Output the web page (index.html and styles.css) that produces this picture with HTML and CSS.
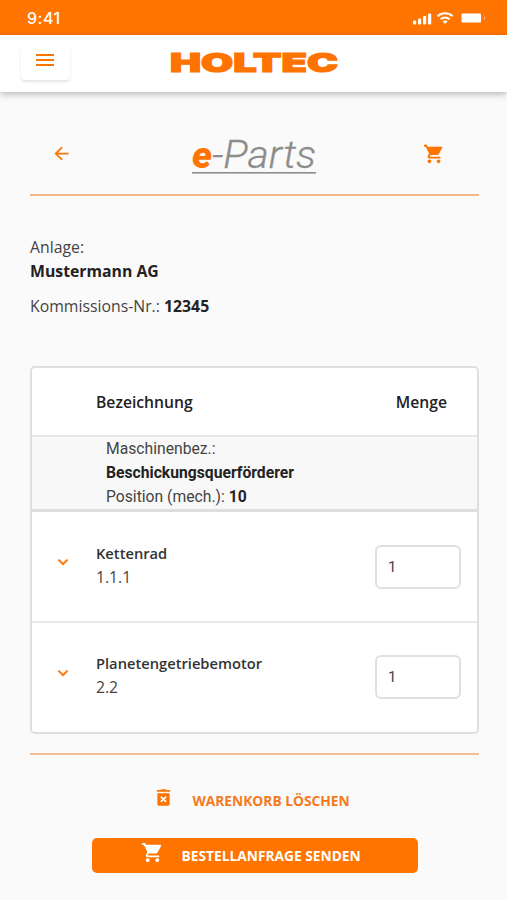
FILE: index.html
```
<!DOCTYPE html>
<html lang="de">
<head>
    <meta charset="UTF-8">
    <meta name="viewport" content="width=device-width, initial-scale=1.0">
    <title>HOLTEC e-Parts - Warenkorb</title>
    <link rel="stylesheet" href="styles.css">
</head>
<body>
    <div class="status-bar">
        <span class="time">9:41</span>
        <svg class="status-icons" width="72" height="14" viewBox="0 0 72 14">
            <rect x="0" y="9.5" width="3.2" height="4" rx="1"/>
            <rect x="5" y="7.5" width="3.2" height="6" rx="1"/>
            <rect x="10" y="5" width="3.2" height="8.5" rx="1"/>
            <rect x="15" y="2.5" width="3.2" height="11" rx="1"/>
            <g fill="none" stroke="#fff" stroke-width="2">
                <path d="M24.6 5.2a11 11 0 0 1 15 0"/>
                <path d="M27.6 8.3a6.6 6.6 0 0 1 9 0"/>
            </g>
            <path d="M32.1 13l-2.5-2.6a3.6 3.6 0 0 1 5 0z"/>
            <rect x="48.5" y="2.5" width="19.5" height="9" rx="1"/>
            <rect x="71" y="5.5" width="1" height="3" opacity=".5"/>
        </svg>
    </div>

    <header class="navbar">
        <button class="menu-btn" aria-label="Menü">
            <svg width="24" height="24" viewBox="0 0 24 24"><path d="M3 18h18v-2H3v2zm0-5h18v-2H3v2zm0-7v2h18V6H3z"/></svg>
        </button>
        <svg class="logo" width="170" height="32" viewBox="0 0 170 32">
            <text x="0" y="27" textLength="168" lengthAdjust="spacingAndGlyphs">HOLTEC</text>
        </svg>
    </header>

    <main>
        <div class="title-bar">
            <svg class="back" width="24" height="24" viewBox="0 0 24 24"><path d="M20 11H7.83l5.59-5.59L12 4l-8 8 8 8 1.41-1.41L7.83 13H20v-2z"/></svg>
            <svg class="eparts" width="132" height="56" viewBox="0 0 132 56">
                <text class="e" x="2" y="43" textLength="20" lengthAdjust="spacingAndGlyphs">e</text>
                <text class="parts" x="22" y="43" textLength="104" lengthAdjust="spacingAndGlyphs">-Parts</text>
                <rect x="2" y="47" width="124" height="1.6"/>
            </svg>
            <svg class="cart" width="24" height="24" viewBox="0 0 24 24"><path d="M7 18c-1.1 0-1.99.9-1.99 2S5.9 22 7 22s2-.9 2-2-.9-2-2-2zM1 2v2h2l3.6 7.59-1.35 2.45c-.16.28-.25.61-.25.96 0 1.1.9 2 2 2h12v-2H7.42c-.14 0-.25-.11-.25-.25l.03-.12.9-1.63h7.45c.75 0 1.41-.41 1.75-1.03l3.58-6.49A1 1 0 0 0 20 4H5.21l-.94-2H1zm16 16c-1.1 0-1.99.9-1.99 2s.89 2 1.99 2 2-.9 2-2-.9-2-2-2z"/></svg>
        </div>

        <section class="info">
            <p>Anlage:<br><b>Mustermann AG</b></p>
            <p>Kommissions-Nr.: <b>12345</b></p>
        </section>

        <section class="table">
            <div class="table-head">
                <span>Bezeichnung</span>
                <span>Menge</span>
            </div>
            <div class="machine">
                Maschinenbez.:<br>
                <b>Beschickungsquerförderer</b><br>
                Position (mech.): <b>10</b>
            </div>
            <div class="row">
                <svg class="chevron" width="20" height="20" viewBox="0 0 24 24"><path d="M7.41 8.59L12 13.17l4.59-4.58L18 10l-6 6-6-6z"/></svg>
                <div class="part"><b>Kettenrad</b><span>1.1.1</span></div>
                <input type="text" value="1">
            </div>
            <div class="row">
                <svg class="chevron" width="20" height="20" viewBox="0 0 24 24"><path d="M7.41 8.59L12 13.17l4.59-4.58L18 10l-6 6-6-6z"/></svg>
                <div class="part"><b>Planetengetriebemotor</b><span>2.2</span></div>
                <input type="text" value="1">
            </div>
        </section>

        <div class="actions">
            <button class="clear">
                <svg width="24" height="24" viewBox="0 0 24 24"><path fill-rule="evenodd" d="M5 7h14v12.5a2 2 0 0 1-2 2H7a2 2 0 0 1-2-2zM8.2 11.6L10.6 14l-2.4 2.4 1.4 1.4L12 15.4l2.4 2.4 1.4-1.4L13.4 14l2.4-2.4-1.4-1.4L12 12.6l-2.4-2.4zM15.5 3.5l-1-1h-5l-1 1H4.5v2h15v-2z"/></svg>
                <span>WARENKORB LÖSCHEN</span>
            </button>
            <button class="send">
                <svg width="24" height="24" viewBox="0 0 24 24"><path d="M7 18c-1.1 0-1.99.9-1.99 2S5.9 22 7 22s2-.9 2-2-.9-2-2-2zM1 2v2h2l3.6 7.59-1.35 2.45c-.16.28-.25.61-.25.96 0 1.1.9 2 2 2h12v-2H7.42c-.14 0-.25-.11-.25-.25l.03-.12.9-1.63h7.45c.75 0 1.41-.41 1.75-1.03l3.58-6.49A1 1 0 0 0 20 4H5.21l-.94-2H1zm16 16c-1.1 0-1.99.9-1.99 2s.89 2 1.99 2 2-.9 2-2-.9-2-2-2z"/></svg>
                <span>BESTELLANFRAGE SENDEN</span>
            </button>
        </div>
    </main>
</body>
</html>
```
FILE: styles.css
```
* {
    margin: 0;
    padding: 0;
    box-sizing: border-box;
}

body {
    font-family: 'Open Sans', 'Noto Sans', sans-serif;
    font-size: 15.7px;
    line-height: 24.3px;
    color: #444;
    background: #fafafa;
    height: 900px;
    overflow: hidden;
}

svg {
    display: block;
    fill: #ff7300;
}

b {
    color: #222;
}

button {
    border: none;
    background: none;
    font-family: inherit;
}

.status-bar {
    display: flex;
    justify-content: space-between;
    height: 35px;
    padding: 11px 22px 0 27px;
    background: #ff7500;
}

.time {
    font-family: 'Inter', sans-serif;
    font-size: 16px;
    font-weight: 500;
    letter-spacing: 0.5px;
    line-height: 15px;
    color: #fff;
}

.status-icons {
    fill: #fff;
}

.navbar {
    display: flex;
    align-items: flex-start;
    height: 57px;
    padding-left: 21px;
    background: #fff;
    box-shadow: 0 2px 7px rgba(0,0,0,0.28);
}

.menu-btn {
    display: flex;
    justify-content: center;
    width: 49px;
    height: 35px;
    margin-top: 10px;
    padding: 3px 2px 0 0;
    border-radius: 4px;
    box-shadow: 0 2px 3px rgba(0,0,0,0.1);
}

.logo {
    margin: 10px 0 0 100px;
    font-family: 'Inter', sans-serif;
    font-size: 26px;
    font-weight: 900;
    stroke: #ff7300;
    stroke-width: 1.2px;
}

main {
    padding: 0 28px 0 30px;
}

.title-bar {
    display: flex;
    justify-content: space-between;
    height: 104px;
    padding: 33px 34px 0 21px;
    border-bottom: 2px solid #f3b787;
}

.back {
    width: 21px;
    height: 21px;
    margin-top: 18px;
}

.eparts {
    margin-right: -17px;
    fill: #8c8c8c;
    font-family: 'Roboto', sans-serif;
    font-style: italic;
}

.eparts .e {
    fill: #ff7300;
    font-size: 37px;
    font-weight: 900;
}

.eparts .parts {
    font-size: 38px;
    font-weight: 300;
    stroke: #8c8c8c;
    stroke-width: 0.3px;
}

.cart {
    width: 22px;
    height: 22px;
    margin-top: 18px;
}

.info {
    padding-top: 39px;
    font-size: 15.8px;
}

.info p {
    margin-bottom: 10px;
}

.table {
    margin-top: 48px;
    border: 2px solid #dfdfdf;
    border-radius: 5px;
    background: #fff;
}

.table-head {
    display: flex;
    justify-content: space-between;
    height: 67px;
    padding: 22px 30px 0 64px;
    font-weight: 600;
    color: #222;
}

.machine {
    height: 77px;
    padding-left: 74px;
    border-top: 2px solid #e8e8e8;
    border-bottom: 3px solid #dedede;
    background: #f8f8f8;
    font-family: 'Roboto', sans-serif;
    font-size: 15.7px;
}

.row {
    display: flex;
    height: 109px;
    padding-right: 16px;
}

.row + .row {
    height: 111px;
    border-top: 2px solid #e8e8e8;
}

.row + .row .part {
    padding-top: 28px;
}

.row + .row input {
    margin-top: 32px;
}

.chevron {
    margin: 40px 0 0 21px;
    stroke: #ff7300;
    stroke-width: 0.6px;
}

.part {
    display: flex;
    flex: 1;
    flex-direction: column;
    padding: 29px 0 0 23px;
}

.part b {
    font-size: 14.7px;
    font-weight: 600;
    color: #333;
}

input {
    width: 86px;
    height: 44px;
    margin-top: 33px;
    padding-left: 11px;
    border: 2px solid #e0e0e0;
    border-radius: 6px;
    font: 15px 'Roboto', sans-serif;
    color: #444;
}

.actions {
    display: flex;
    flex-direction: column;
    align-items: center;
    margin-top: 19px;
    border-top: 2px solid #f0bf94;
}

.actions span {
    font-size: 13.75px;
    font-weight: 700;
    white-space: nowrap;
}

.clear,
.send {
    display: flex;
    align-items: center;
    width: 326px;
    height: 35px;
}

.clear {
    margin-top: 28px;
    margin-bottom: 20px;
    padding-left: 61px;
    color: #f5791d;
}

.clear svg {
    width: 21px;
    height: 21px;
    margin: 0 19px 5px 0;
}

.send {
    padding-left: 49px;
    border-radius: 5px;
    background: #ff7500;
    color: #fff;
}

.send svg {
    width: 23px;
    height: 23px;
    margin: 0 18px 5px 0;
    fill: #fff;
}
```
